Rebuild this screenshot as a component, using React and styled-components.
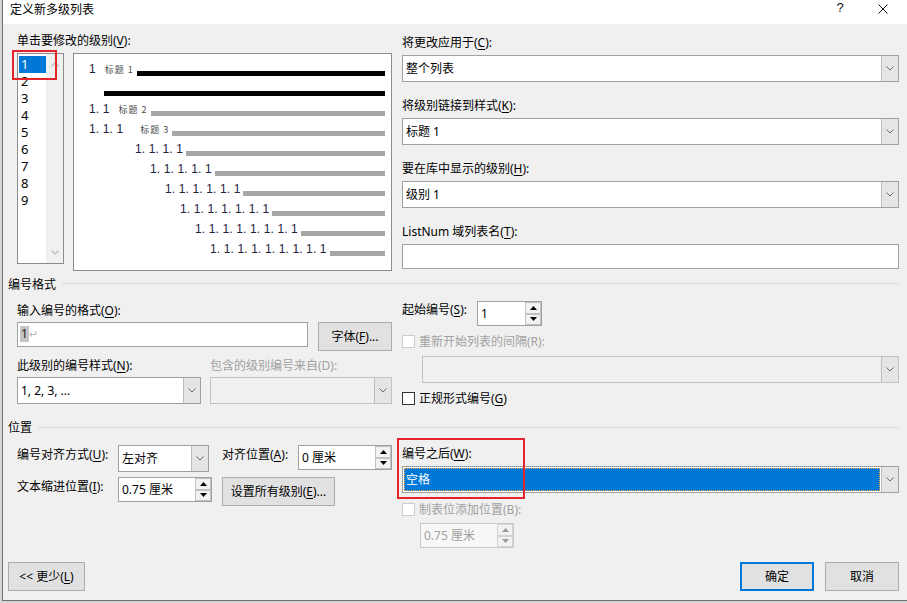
import React from "react";
import styled, { createGlobalStyle } from "styled-components";

const FONT = `"Noto Sans", "Noto Sans CJK SC", sans-serif`;

const Global = createGlobalStyle`
  html, body { margin: 0; padding: 0; }
  body {
    background: #d6d6d6;
    font-family: ${FONT};
    font-size: 12px;
    color: #000;
    overflow: hidden;
  }
  #root { width: 907px; height: 603px; }
`;

const Dialog = styled.div`
  margin-left: 2px;
  width: 905px;
  height: 601px;
  box-sizing: border-box;
  border-left: 1px solid #6e6e6e;
  border-bottom: 1px solid #6e6e6e;
  background: #f0f0f0;
  display: flex;
  flex-direction: column;
`;

const TitleBar = styled.div`
  height: 24px;
  flex: none;
  background: #fff;
  display: flex;
  align-items: flex-start;
  padding-right: 4px;
`;

const TitleText = styled.div`
  flex: 1;
  padding: 2px 0 0 7px;
  line-height: 16px;
  white-space: nowrap;
`;

const CaptionButton = styled.div`
  width: ${(p) => p.$w}px;
  height: 24px;
  display: flex;
  justify-content: center;
  align-items: flex-start;
  padding-top: ${(p) => p.$pt || 0}px;
  box-sizing: border-box;
  font-family: "Liberation Sans", sans-serif;
  font-size: 13px;
  line-height: 16px;
  color: #111;
`;

const Body = styled.div`
  flex: 1;
  display: flex;
  flex-direction: column;
  padding: 9px 8px 9px 5px;
  min-height: 0;
`;

const Indent = styled.div`
  padding-left: 9px;
`;

const TwoCol = styled.div`
  display: grid;
  grid-template-columns: 375px 497px;
  column-gap: 10px;
  margin-top: ${(p) => p.$mt || 0}px;
`;

const Col = styled.div`
  display: flex;
  flex-direction: column;
  position: relative;
  padding-top: ${(p) => p.$pt || 0}px;
`;

const Label = styled.div`
  line-height: 16px;
  white-space: nowrap;
  color: ${(p) => (p.$disabled ? "#a0a0a0" : "#000")};
  margin-top: ${(p) => p.$mt || 0}px;
  padding-top: ${(p) => p.$pt || 0}px;
  width: ${(p) => (p.$w ? `${p.$w}px` : "auto")};
  flex: none;
`;

const Acc = styled.u`
  text-underline-offset: 2px;
`;

const GroupHeader = styled.div`
  display: flex;
  align-items: flex-start;
  margin-top: ${(p) => p.$mt || 0}px;
`;

const GroupTitle = styled.div`
  line-height: 16px;
  white-space: nowrap;
`;

const GroupLine = styled.div`
  flex: 1;
  height: 1px;
  background: #dadada;
  margin: ${(p) => p.$lt}px 0 0 6px;
`;

/* ---------- level list + preview ---------- */

const LevelRow = styled.div`
  display: flex;
  align-items: flex-start;
  margin-top: 4px;
  position: relative;
`;

const LevelList = styled.div`
  width: 47px;
  height: 211px;
  box-sizing: border-box;
  border: 1px solid #8c8c8c;
  background: #fff;
  display: flex;
  flex: none;
`;

const LevelItems = styled.div`
  flex: 1;
  padding: 2px 0 0 1px;
`;

const LevelItem = styled.div`
  height: 17px;
  line-height: 17px;
  padding-left: 2px;
  font-size: 13px;
  background: ${(p) => (p.$sel ? "#0078d7" : "transparent")};
  color: ${(p) => (p.$sel ? "#fff" : "#000")};
`;

const ScrollTrack = styled.div`
  width: 17px;
  background: #f0f0f0;
  display: flex;
  flex-direction: column;
  justify-content: space-between;
  align-items: center;
  padding: 8px 0 8px;
  box-sizing: border-box;
`;

const Preview = styled.div`
  margin-left: 9px;
  flex: 1;
  height: 218px;
  box-sizing: border-box;
  border: 1px solid #8c8c8c;
  background: #fff;
  padding: 9px 6px 0 15px;
`;

const PRow = styled.div`
  display: flex;
  align-items: center;
  height: 20px;
  padding-left: ${(p) => p.$indent || 0}px;
`;

const Num = styled.span`
  align-self: flex-start;
  font-family: "Liberation Sans", sans-serif;
  font-size: 12px;
  line-height: 12px;
  letter-spacing: 0.13px;
  white-space: pre;
  color: #23233c;
`;

const Heading = styled.span`
  align-self: flex-start;
  margin-top: 1px;
  margin-left: ${(p) => p.$ml}px;
  width: 29px;
  flex: none;
  font-family: "Noto Sans CJK SC", sans-serif;
  font-size: 9px;
  line-height: 12px;
  letter-spacing: 1px;
  white-space: nowrap;
  color: #4a4a4a;
`;

const Bar = styled.div`
  flex: 1;
  height: 5px;
  margin-left: ${(p) => p.$ml || 3}px;
  background: ${(p) => (p.$dark ? "#000" : "#a6a6a6")};
`;

const RedMark = styled.div`
  position: absolute;
  left: ${(p) => p.$l}px;
  top: ${(p) => p.$t}px;
  width: ${(p) => p.$w}px;
  height: ${(p) => p.$h}px;
  box-sizing: border-box;
  border: 2px solid #e3242b;
  pointer-events: none;
`;

/* ---------- form controls ---------- */

const Field = styled.div`
  display: flex;
  flex-direction: column;
  margin-top: ${(p) => p.$mt || 0}px;
`;

const Select = styled.div`
  display: flex;
  height: 27px;
  box-sizing: border-box;
  border: 1px solid ${(p) => (p.$disabled ? "#c2c2c2" : "#a0a0a0")};
  background: ${(p) => (p.$disabled ? "#f0f0f0" : "#fff")};
  width: ${(p) => (p.$w ? `${p.$w}px` : "auto")};
  margin-top: ${(p) => p.$mt || 0}px;
  margin-left: ${(p) => p.$ml || 0}px;
  flex: none;
`;

const SelectText = styled.div`
  flex: 1;
  padding-left: 3px;
  line-height: 25px;
  white-space: nowrap;
  overflow: hidden;
`;

const Highlight = styled.div`
  flex: 1;
  margin: 1px;
  background: #0078d7;
  color: #fff;
  line-height: 23px;
  padding-left: 2px;
  outline: 1px dotted #f0a848;
  outline-offset: -1px;
`;

const ArrowBox = styled.div`
  width: 16px;
  flex: none;
  background: #e5e5e5;
  border-left: 1px solid #bcbcbc;
  display: flex;
  align-items: center;
  justify-content: center;
`;

const TextInput = styled.div`
  height: 25px;
  box-sizing: border-box;
  border: 1px solid #a0a0a0;
  background: #fff;
  width: ${(p) => (p.$w ? `${p.$w}px` : "auto")};
  margin-top: ${(p) => p.$mt || 0}px;
  padding: 3px 0 0 2px;
  display: flex;
  align-items: flex-start;
  flex: none;
`;

const Caret = styled.span`
  background: #c4c4c4;
  line-height: 16px;
  padding: 0 1px;
  color: #202020;
`;

const ReturnMark = styled.span`
  color: #b8b8b8;
  line-height: 16px;
  font-size: 11px;
`;

const Spinner = styled.div`
  display: flex;
  height: 25px;
  box-sizing: border-box;
  border: 1px solid ${(p) => (p.$disabled ? "#c8c8c8" : "#a0a0a0")};
  background: ${(p) => (p.$disabled ? "#f7f7f7" : "#fff")};
  color: ${(p) => (p.$disabled ? "#a0a0a0" : "#000")};
  width: ${(p) => p.$w}px;
  margin-top: ${(p) => p.$mt || 0}px;
  margin-left: ${(p) => p.$ml || 0}px;
  flex: none;
`;

const SpinText = styled.div`
  flex: 1;
  padding-left: 3px;
  line-height: 23px;
  white-space: nowrap;
`;

const SpinButtons = styled.div`
  width: 16px;
  display: flex;
  flex-direction: column;
  flex: none;
`;

const SpinBtn = styled.div`
  flex: 1;
  border: 1px solid ${(p) => (p.$disabled ? "#d4d4d4" : "#c2c2c2")};
  background: #f2f2f2;
  display: flex;
  align-items: center;
  justify-content: center;
`;

const Row = styled.div`
  display: flex;
  align-items: flex-start;
  margin-top: ${(p) => p.$mt || 0}px;
`;

const CheckRow = styled.div`
  display: flex;
  align-items: center;
  height: 13px;
  margin-top: ${(p) => p.$mt || 0}px;
`;

const CheckBox = styled.div`
  width: 13px;
  height: 13px;
  box-sizing: border-box;
  border: 1px solid ${(p) => (p.$disabled ? "#cccccc" : "#333")};
  background: #fff;
  flex: none;
  margin-right: 4px;
`;

const Button = styled.div`
  width: ${(p) => p.$w}px;
  height: 29px;
  box-sizing: border-box;
  border: ${(p) => (p.$default ? "2px solid #0078d7" : "1px solid #adadad")};
  background: #e1e1e1;
  display: flex;
  align-items: center;
  justify-content: center;
  white-space: nowrap;
  line-height: 16px;
  margin-left: ${(p) => p.$ml || 0}px;
  flex: none;
`;

const FormatCols = styled.div`
  display: grid;
  grid-template-columns: 184px 1fr;
  column-gap: 9px;
  margin-top: 7px;
`;

const PosGrid = styled.div`
  display: grid;
  grid-template-columns: 101px 104px 76px 94px;
  row-gap: 5px;
  align-items: start;
`;

const SpanCell = styled.div`
  grid-column: ${(p) => p.$col};
`;

const Footer = styled.div`
  margin-top: auto;
  display: flex;
  align-items: flex-start;
`;

const Spacer = styled.div`
  flex: 1;
`;

/* ---------- icons ---------- */

const Chevron = ({ color = "#6a6a6a" }) => (
  <svg width="8" height="5" viewBox="0 0 8 5">
    <polyline points="0.5,0.5 4,4 7.5,0.5" fill="none" stroke={color} strokeWidth="1" />
  </svg>
);

const ScrollChevron = ({ up }) => (
  <svg width="8" height="5" viewBox="0 0 8 5">
    <polyline
      points={up ? "0.5,4.5 4,1 7.5,4.5" : "0.5,0.5 4,4 7.5,0.5"}
      fill="none"
      stroke="#c6c6c6"
      strokeWidth="1.6"
    />
  </svg>
);

const Tri = ({ up, color = "#000" }) => (
  <svg width="7" height="4" viewBox="0 0 7 4">
    <polygon points={up ? "3.5,0 7,4 0,4" : "0,0 7,0 3.5,4"} fill={color} />
  </svg>
);

const CloseIcon = () => (
  <svg width="10" height="10" viewBox="0 0 10 10">
    <path d="M0.5 0.5 L9.5 9.5 M9.5 0.5 L0.5 9.5" stroke="#111" strokeWidth="1" />
  </svg>
);

/* ---------- composed parts ---------- */

const Combo = ({ text, w, mt, ml, disabled, focused }) => (
  <Select $w={w} $mt={mt} $ml={ml} $disabled={disabled}>
    {focused ? <Highlight>{text}</Highlight> : <SelectText>{text}</SelectText>}
    <ArrowBox>
      <Chevron />
    </ArrowBox>
  </Select>
);

const Spin = ({ text, w, mt, ml, disabled }) => (
  <Spinner $w={w} $mt={mt} $ml={ml} $disabled={disabled}>
    <SpinText>{text}</SpinText>
    <SpinButtons>
      <SpinBtn $disabled={disabled}>
        <Tri up color={disabled ? "#9a9a9a" : "#000"} />
      </SpinBtn>
      <SpinBtn $disabled={disabled}>
        <Tri color={disabled ? "#9a9a9a" : "#000"} />
      </SpinBtn>
    </SpinButtons>
  </Spinner>
);

const levels = ["1", "2", "3", "4", "5", "6", "7", "8", "9"];

const nums = (n) => Array.from({ length: n }, () => "1").join(". ");

export default function App() {
  return (
    <>
      <Global />
      <Dialog>
        <TitleBar>
          <TitleText>定义新多级列表</TitleText>
          <CaptionButton $w={46}>?</CaptionButton>
          <CaptionButton $w={40} $pt={4}>
            <CloseIcon />
          </CaptionButton>
        </TitleBar>

        <Body>
          <Indent>
            <TwoCol>
              <Col>
                <Label>
                  单击要修改的级别(<Acc>V</Acc>):
                </Label>
                <LevelRow>
                  <LevelList>
                    <LevelItems>
                      {levels.map((l, i) => (
                        <LevelItem key={l} $sel={i === 0}>
                          {l}
                        </LevelItem>
                      ))}
                    </LevelItems>
                    <ScrollTrack>
                      <ScrollChevron up />
                      <ScrollChevron />
                    </ScrollTrack>
                  </LevelList>
                  <Preview>
                    <PRow>
                      <Num>1</Num>
                      <Heading $ml={9}>标题 1</Heading>
                      <Bar $dark />
                    </PRow>
                    <PRow>
                      <Bar $dark $ml={15} />
                    </PRow>
                    <PRow>
                      <Num>{nums(2)}</Num>
                      <Heading $ml={9}>标题 2</Heading>
                      <Bar />
                    </PRow>
                    <PRow>
                      <Num>{nums(3)}</Num>
                      <Heading $ml={17}>标题 3</Heading>
                      <Bar />
                    </PRow>
                    {[4, 5, 6, 7, 8, 9].map((n) => (
                      <PRow key={n} $indent={46 + (n - 4) * 15}>
                        <Num>{nums(n)}</Num>
                        <Bar />
                      </PRow>
                    ))}
                  </Preview>
                  <RedMark $l={-5} $t={-3} $w={45} $h={30} />
                </LevelRow>
              </Col>

              <Col $pt={2}>
                <Field>
                  <Label>
                    将更改应用于(<Acc>C</Acc>):
                  </Label>
                  <Combo text="整个列表" mt={4} />
                </Field>
                <Field $mt={16}>
                  <Label>
                    将级别链接到样式(<Acc>K</Acc>):
                  </Label>
                  <Combo text="标题 1" mt={4} />
                </Field>
                <Field $mt={16}>
                  <Label>
                    要在库中显示的级别(<Acc>H</Acc>):
                  </Label>
                  <Combo text="级别 1" mt={4} />
                </Field>
                <Field $mt={16}>
                  <Label>
                    ListNum 域列表名(<Acc>T</Acc>):
                  </Label>
                  <TextInput $mt={4} />
                </Field>
              </Col>
            </TwoCol>
          </Indent>

          <GroupHeader $mt={6}>
            <GroupTitle>编号格式</GroupTitle>
            <GroupLine $lt={6} />
          </GroupHeader>

          <Indent>
            <TwoCol $mt={8}>
              <Col>
                <Label $mt={2}>
                  输入编号的格式(<Acc>O</Acc>):
                </Label>
                <Row $mt={3}>
                  <TextInput $w={291}>
                    <Caret>1</Caret>
                    <ReturnMark>↵</ReturnMark>
                  </TextInput>
                  <Button $w={74} $ml={10}>
                    字体(<Acc>F</Acc>)...
                  </Button>
                </Row>
                <FormatCols>
                  <Field>
                    <Label>
                      此级别的编号样式(<Acc>N</Acc>):
                    </Label>
                    <Combo text="1, 2, 3, ..." mt={3} />
                  </Field>
                  <Field>
                    <Label $disabled>包含的级别编号来自(D):</Label>
                    <Combo text="" mt={3} disabled />
                  </Field>
                </FormatCols>
              </Col>

              <Col>
                <Row>
                  <Label $w={75} $pt={1}>
                    起始编号(<Acc>S</Acc>):
                  </Label>
                  <Spin text="1" w={65} />
                </Row>
                <CheckRow $mt={9}>
                  <CheckBox $disabled />
                  <Label $disabled>重新开始列表的间隔(R):</Label>
                </CheckRow>
                <Combo text="" mt={8} ml={20} disabled />
                <CheckRow $mt={9}>
                  <CheckBox />
                  <Label>
                    正规形式编号(<Acc>G</Acc>)
                  </Label>
                </CheckRow>
              </Col>
            </TwoCol>
          </Indent>

          <GroupHeader $mt={15}>
            <GroupTitle>位置</GroupTitle>
            <GroupLine $lt={7} />
          </GroupHeader>

          <Indent>
            <TwoCol $mt={9}>
              <Col>
                <PosGrid>
                  <Label $pt={2}>
                    编号对齐方式(<Acc>U</Acc>):
                  </Label>
                  <Combo text="左对齐" w={91} />
                  <Label $pt={2}>
                    对齐位置(<Acc>A</Acc>):
                  </Label>
                  <Spin text="0 厘米" w={94} />

                  <Label $pt={2}>
                    文本缩进位置(<Acc>I</Acc>):
                  </Label>
                  <Spin text="0.75 厘米" w={94} />
                  <SpanCell $col="3 / span 2">
                    <Button $w={113}>
                      设置所有级别(<Acc>E</Acc>)...
                    </Button>
                  </SpanCell>
                </PosGrid>
              </Col>

              <Col>
                <Label $mt={1}>
                  编号之后(<Acc>W</Acc>):
                </Label>
                <Combo text="空格" mt={4} focused />
                <CheckRow $mt={10}>
                  <CheckBox $disabled />
                  <Label $disabled>制表位添加位置(B):</Label>
                </CheckRow>
                <Spin text="0.75 厘米" w={94} mt={7} ml={18} disabled />
                <RedMark $l={-5} $t={-7} $w={128} $h={61} />
              </Col>
            </TwoCol>
          </Indent>

          <Footer>
            <Button $w={77}>
              {"<< 更少("}
              <Acc>L</Acc>)
            </Button>
            <Spacer />
            <Button $w={74} $default>
              确定
            </Button>
            <Button $w={74} $ml={11}>
              取消
            </Button>
          </Footer>
        </Body>
      </Dialog>
    </>
  );
}
